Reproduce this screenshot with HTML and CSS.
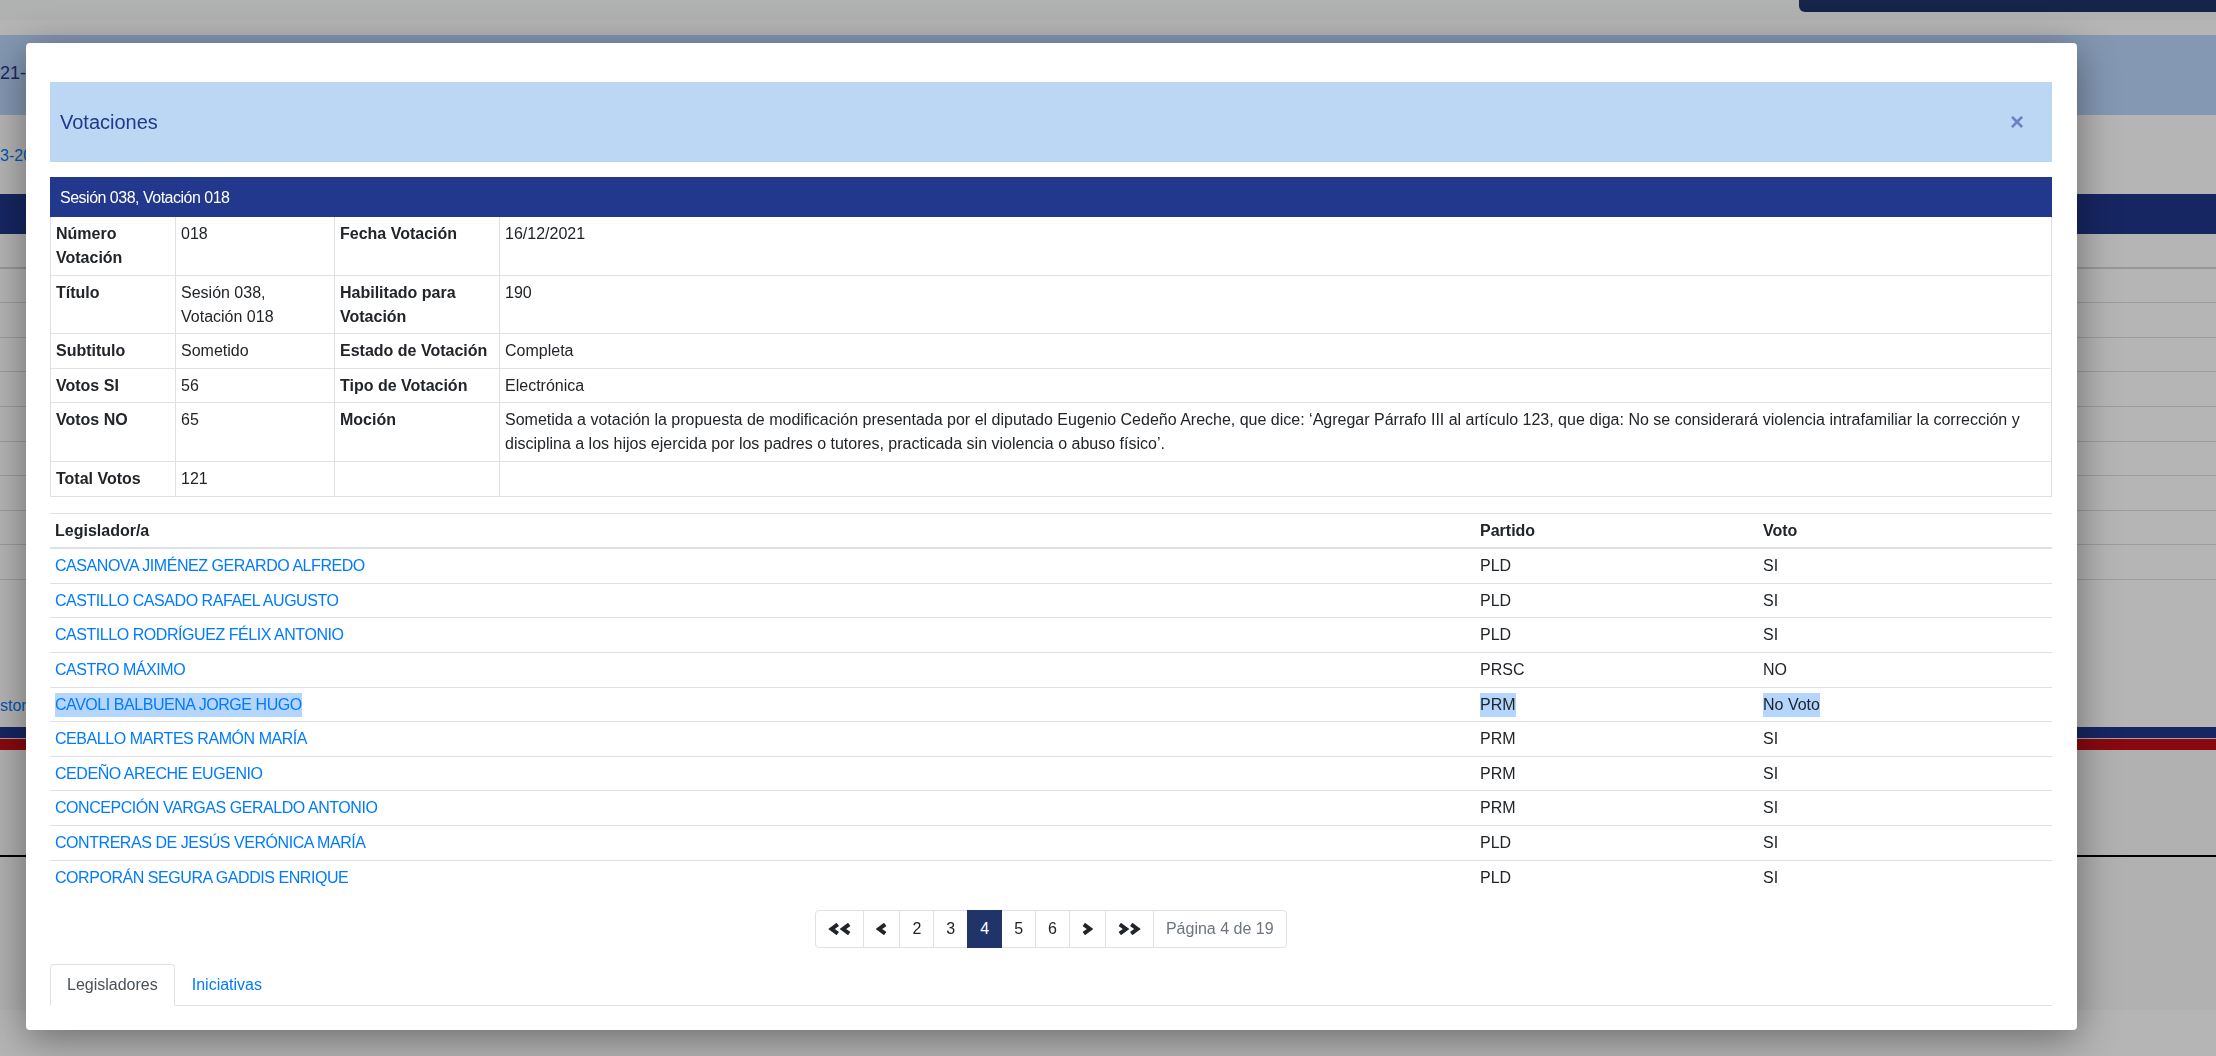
FILE: index.html
```html
<!DOCTYPE html>
<html lang="es">
<head>
<meta charset="utf-8">
<title>Votaciones</title>
<link rel="stylesheet" href="styles.css">
</head>
<body>
<div class="page">
  <div class="topbar"><div class="toptab"></div></div>
  <div class="topwhite"></div>
  <div class="hero"><span class="hero-title">21-SLO-00019</span></div>
  <div class="sub"><a class="bg-link">3-2021</a></div>
  <div class="bg-navbar"></div>
  <div class="bg-rows">
    <div class="bg-row head"></div>
    <div class="bg-row"></div><div class="bg-row"></div><div class="bg-row"></div>
    <div class="bg-row"></div><div class="bg-row"></div><div class="bg-row"></div>
    <div class="bg-row"></div><div class="bg-row"></div><div class="bg-row"></div>
  </div>
  <div class="bg-gap"><a class="bg-link">storial</a></div>
  <div class="stripe-navy"></div>
  <div class="stripe-sep"></div>
  <div class="stripe-red"></div>
  <div class="bg-footer">
    <div class="footer-line"></div>
  </div>
</div>

<div class="backdrop"></div>

<div class="modal">
  <div class="modal-header">
    <h5 class="modal-title">Votaciones</h5>
    <button class="close" type="button">×</button>
  </div>

  <div class="section-bar">Sesión 038, Votación 018</div>
  <table class="details">
    <colgroup><col class="c1"><col class="c2"><col class="c3"><col></colgroup>
    <tbody>
      <tr><th>Número Votación</th><td>018</td><th>Fecha Votación</th><td>16/12/2021</td></tr>
      <tr><th>Título</th><td>Sesión 038, Votación 018</td><th>Habilitado para Votación</th><td>190</td></tr>
      <tr><th>Subtitulo</th><td>Sometido</td><th>Estado de Votación</th><td>Completa</td></tr>
      <tr><th>Votos SI</th><td>56</td><th>Tipo de Votación</th><td>Electrónica</td></tr>
      <tr><th>Votos NO</th><td>65</td><th>Moción</th><td>Sometida a votación la propuesta de modificación presentada por el diputado Eugenio Cedeño Areche, que dice: ‘Agregar Párrafo III al artículo 123, que diga: No se considerará violencia intrafamiliar la corrección y disciplina a los hijos ejercida por los padres o tutores, practicada sin violencia o abuso físico’.</td></tr>
      <tr><th>Total Votos</th><td>121</td><td></td><td></td></tr>
    </tbody>
  </table>

  <table class="legis">
    <colgroup><col class="l1"><col class="l2"><col></colgroup>
    <thead>
      <tr><th>Legislador/a</th><th>Partido</th><th>Voto</th></tr>
    </thead>
    <tbody>
      <tr><td><a class="lnk">CASANOVA JIMÉNEZ GERARDO ALFREDO</a></td><td>PLD</td><td>SI</td></tr>
      <tr><td><a class="lnk">CASTILLO CASADO RAFAEL AUGUSTO</a></td><td>PLD</td><td>SI</td></tr>
      <tr><td><a class="lnk">CASTILLO RODRÍGUEZ FÉLIX ANTONIO</a></td><td>PLD</td><td>SI</td></tr>
      <tr><td><a class="lnk">CASTRO MÁXIMO</a></td><td>PRSC</td><td>NO</td></tr>
      <tr><td><a class="lnk"><span class="sel">CAVOLI BALBUENA JORGE HUGO</span></a></td><td><span class="sel">PRM</span></td><td><span class="sel">No Voto</span></td></tr>
      <tr><td><a class="lnk">CEBALLO MARTES RAMÓN MARÍA</a></td><td>PRM</td><td>SI</td></tr>
      <tr><td><a class="lnk">CEDEÑO ARECHE EUGENIO</a></td><td>PRM</td><td>SI</td></tr>
      <tr><td><a class="lnk">CONCEPCIÓN VARGAS GERALDO ANTONIO</a></td><td>PRM</td><td>SI</td></tr>
      <tr><td><a class="lnk">CONTRERAS DE JESÚS VERÓNICA MARÍA</a></td><td>PLD</td><td>SI</td></tr>
      <tr><td><a class="lnk">CORPORÁN SEGURA GADDIS ENRIQUE</a></td><td>PLD</td><td>SI</td></tr>
    </tbody>
  </table>

  <div class="pager-wrap">
    <ul class="pagination">
      <li class="page-item first"><span class="page-link icon"><svg width="23" height="12" viewBox="0 0 23 12"><polyline points="9.8,1.4 3.6,6 9.8,10.6" /><polyline points="21.2,1.4 15,6 21.2,10.6" /></svg></span></li>
      <li class="page-item"><span class="page-link icon"><svg width="11" height="12" viewBox="0 0 11 12"><polyline points="9.2,1.4 3,6 9.2,10.6" /></svg></span></li>
      <li class="page-item"><span class="page-link">2</span></li>
      <li class="page-item"><span class="page-link">3</span></li>
      <li class="page-item active"><span class="page-link">4</span></li>
      <li class="page-item"><span class="page-link">5</span></li>
      <li class="page-item"><span class="page-link">6</span></li>
      <li class="page-item"><span class="page-link icon"><svg width="11" height="12" viewBox="0 0 11 12"><polyline points="1.8,1.4 8,6 1.8,10.6" /></svg></span></li>
      <li class="page-item"><span class="page-link icon"><svg width="23" height="12" viewBox="0 0 23 12"><polyline points="1.8,1.4 8,6 1.8,10.6" /><polyline points="13.2,1.4 19.4,6 13.2,10.6" /></svg></span></li>
      <li class="page-item last"><span class="page-link info">Página 4 de 19</span></li>
    </ul>
  </div>

  <ul class="nav-tabs">
    <li class="tab active">Legisladores</li>
    <li class="tab"><a class="tab-link">Iniciativas</a></li>
  </ul>
</div>
</body>
</html>
```

FILE: styles.css
```css
html, body {
  margin: 0;
  padding: 0;
}
body {
  width: 2216px;
  height: 1056px;
  overflow: hidden;
  background: #ffffff;
  font-family: "Liberation Sans", Arial, Helvetica, sans-serif;
  font-size: 16px;
  line-height: 1.5;
  color: #212529;
}

/* ---------- background page ---------- */
.page {
  width: 2216px;
  height: 1056px;
  display: flex;
  flex-direction: column;
}
.topbar {
  height: 20px;
  background: #f8f9fa;
  display: flex;
  justify-content: flex-end;
  align-items: flex-start;
}
.toptab {
  width: 417px;
  height: 12px;
  background: #213468;
  border-bottom-left-radius: 6px;
}
.topwhite {
  height: 15px;
  background: #ffffff;
}
.hero {
  height: 80px;
  background: #bad7fc;
  display: flex;
  align-items: center;
  overflow: hidden;
}
.hero-title {
  font-size: 18px;
  color: #22388c;
  white-space: nowrap;
  padding-bottom: 4px;
}
.sub {
  height: 79px;
  display: flex;
  align-items: center;
  padding-top: 2px;
  box-sizing: border-box;
}
.bg-link {
  color: #007bff;
  white-space: nowrap;
}
.bg-navbar {
  height: 40px;
  background: #20368b;
}
.bg-rows {
  display: flex;
  flex-direction: column;
}
.bg-row {
  height: 34.6px;
  box-sizing: border-box;
  border-bottom: 1px solid #dcdcdc;
}
.bg-row.head {
  border-bottom: 2px solid #d6d6d6;
}
.bg-gap {
  height: 147px;
  display: flex;
  align-items: flex-end;
  padding-bottom: 9px;
  box-sizing: border-box;
}
.stripe-navy {
  height: 11px;
  background: #20368b;
}
.stripe-sep {
  height: 1px;
  background: #e6e6e6;
}
.stripe-red {
  height: 11px;
  background: #c20e17;
}
.bg-footer {
  height: 260px;
  background: #f9fafa;
  padding-top: 105px;
  box-sizing: border-box;
}
.footer-line {
  height: 2px;
  background: #000000;
}

.backdrop {
  position: fixed;
  inset: 0;
  background: rgba(0, 0, 0, 0.29);
}

/* ---------- modal ---------- */
.modal {
  position: absolute;
  top: 43px;
  left: 26px;
  width: 2051px;
  box-sizing: border-box;
  padding: 39px 25px 24px 24px;
  background: #ffffff;
  border-radius: 4px;
  box-shadow: 0 8px 40px rgba(0, 0, 0, 0.42);
}
.modal-header {
  height: 80px;
  background: #bcd7f4;
  display: flex;
  align-items: center;
  justify-content: space-between;
  padding: 0 28px 0 10px;
}
.modal-title {
  margin: 0;
  font-size: 20px;
  font-weight: normal;
  line-height: 1.5;
  color: #22388c;
}
.close {
  border: 0;
  background: transparent;
  padding: 0;
  margin: 0;
  font-family: "Liberation Sans", Arial, sans-serif;
  font-size: 24px;
  font-weight: bold;
  line-height: 1;
  color: #6c80c4;
  cursor: pointer;
}

.section-bar {
  margin-top: 15px;
  height: 40px;
  box-sizing: border-box;
  background: #22388c;
  color: #ffffff;
  padding: 9px 10px 7px;
  line-height: 24px;
  font-size: 16px;
  letter-spacing: -0.5px;
}

table {
  width: 100%;
  border-collapse: collapse;
  table-layout: fixed;
}
.details {
  margin-bottom: 16px;
}
.details col.c1 { width: 125px; }
.details col.c2 { width: 159px; }
.details col.c3 { width: 165px; }
.details th,
.details td {
  border: 1px solid #dee2e6;
  padding: 5px 5px 4.6px;
  vertical-align: top;
  text-align: left;
  line-height: 24px;
}
.details tr:first-child th,
.details tr:first-child td {
  border-top: 0;
}
.details th {
  font-weight: bold;
}

.legis {
  margin-bottom: 16px;
}
.legis col.l1 { width: 1425px; }
.legis col.l2 { width: 283px; }
.legis th,
.legis td {
  border-top: 1px solid #dee2e6;
  padding: 5px 5px 4.6px;
  text-align: left;
  vertical-align: top;
  line-height: 24px;
}
.legis thead th {
  border-bottom: 2px solid #dee2e6;
  font-weight: bold;
}
.legis thead + tbody tr:first-child td {
  border-top: 0;
}
.lnk {
  color: #007bff;
  text-decoration: none;
  letter-spacing: -0.45px;
}
.sel {
  background: #b4d5fe;
  display: inline-block;
  line-height: 24px;
}

/* ---------- pagination ---------- */
.pager-wrap {
  display: flex;
  justify-content: center;
  margin-bottom: 16px;
}
.pagination {
  display: flex;
  list-style: none;
  margin: 0;
  padding: 0;
}
.page-item {
  display: flex;
}
.page-link {
  display: flex;
  align-items: center;
  justify-content: center;
  height: 38px;
  box-sizing: border-box;
  padding: 8px 12px;
  line-height: 20px;
  border: 1px solid #dee2e6;
  margin-left: -1px;
  color: #212529;
  background: #ffffff;
}
.page-item.first .page-link {
  margin-left: 0;
  border-radius: 4px 0 0 4px;
}
.page-item.last .page-link {
  border-radius: 0 4px 4px 0;
}
.page-item.active .page-link {
  background: #21346a;
  border-color: #21346a;
  color: #ffffff;
  position: relative;
}
.page-link.info {
  color: #6c757d;
}
.page-link svg {
  display: block;
}
.page-link svg polyline {
  fill: none;
  stroke: #212529;
  stroke-width: 4;
  stroke-linejoin: miter;
  stroke-linecap: butt;
}

/* ---------- tabs ---------- */
.nav-tabs {
  display: flex;
  list-style: none;
  margin: 0;
  padding: 0;
  border-bottom: 1px solid #dee2e6;
}
.tab {
  padding: 8px 16px;
  line-height: 24px;
  border: 1px solid transparent;
  border-radius: 4px 4px 0 0;
  margin-bottom: -1px;
}
.tab.active {
  color: #495057;
  background: #ffffff;
  border-color: #dee2e6 #dee2e6 #ffffff;
}
.tab-link {
  color: #007bff;
  text-decoration: none;
}
```
